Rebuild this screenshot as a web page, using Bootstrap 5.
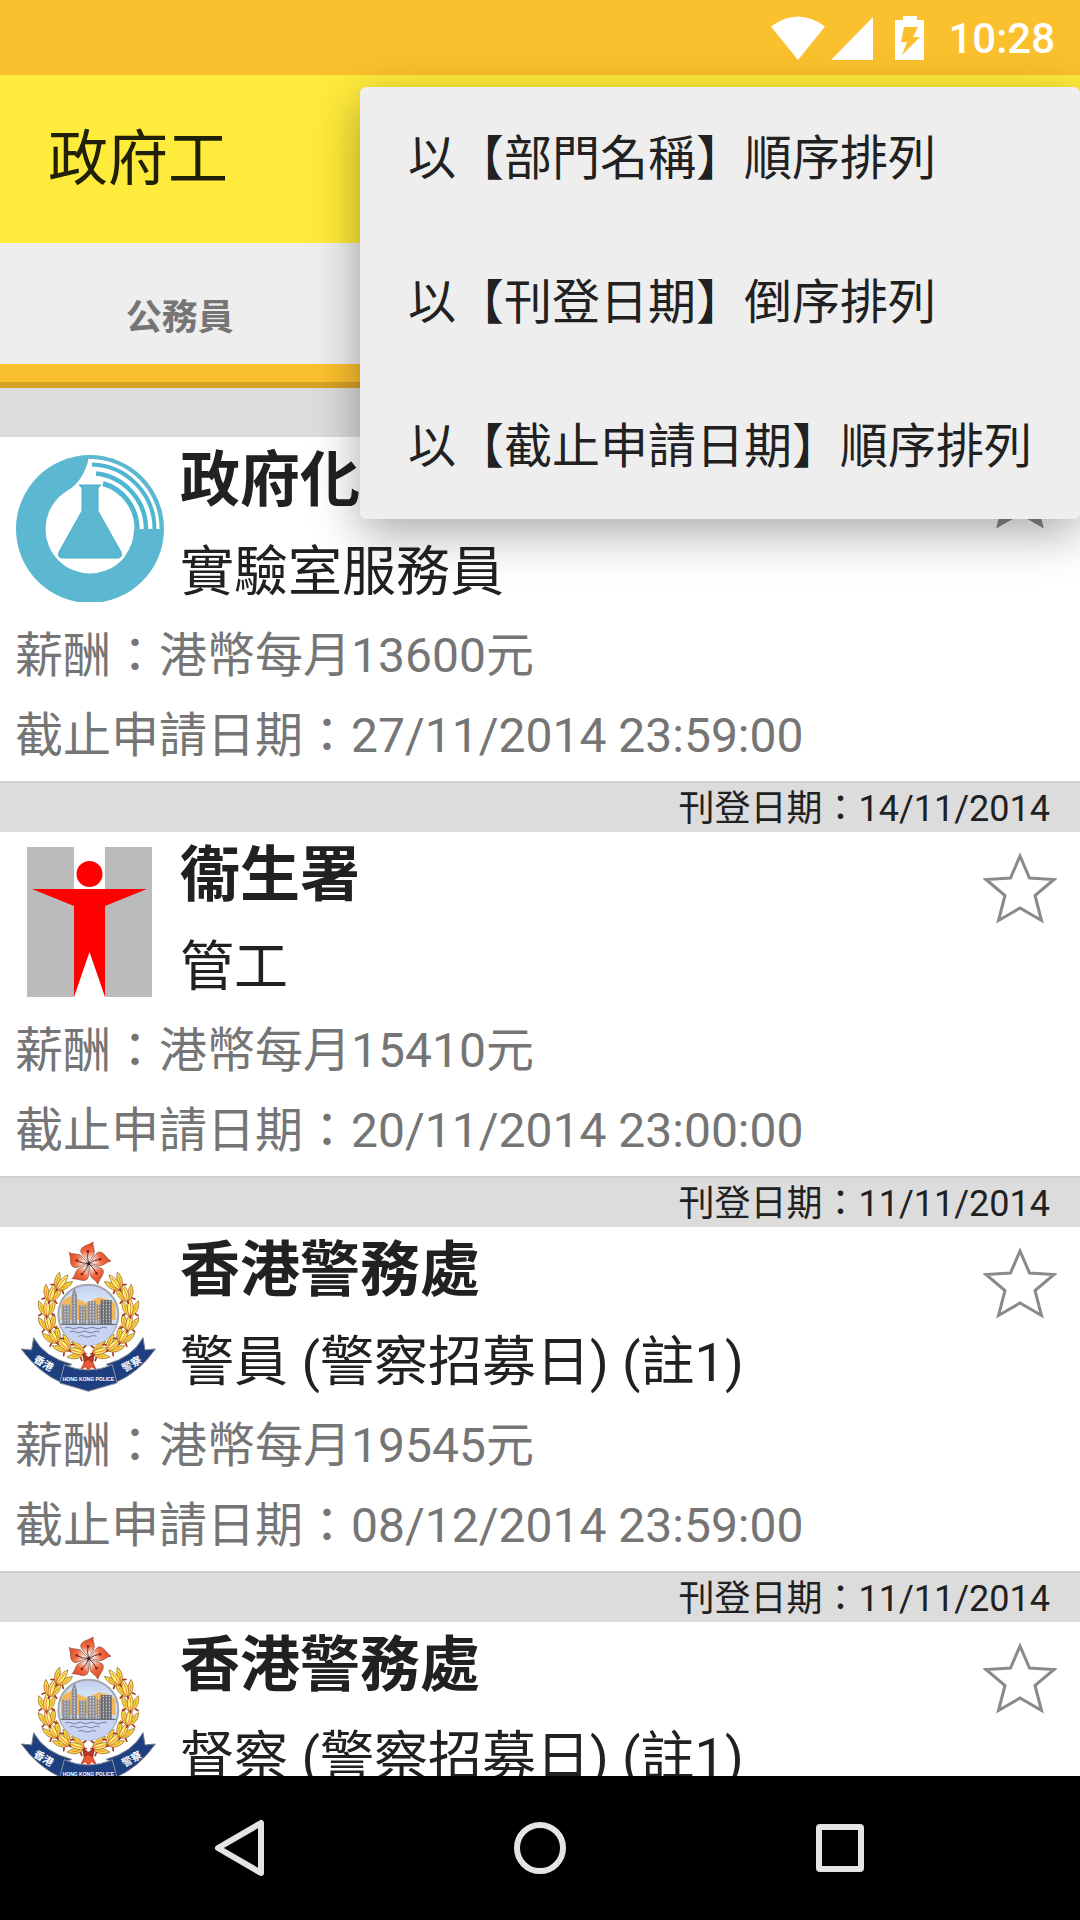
<!DOCTYPE html>
<html lang="zh-Hant-HK">
<head>
<meta charset="utf-8">
<meta name="viewport" content="width=device-width, initial-scale=1">
<title>政府工</title>
<link href="https://cdn.jsdelivr.net/npm/bootstrap@5.3.0/dist/css/bootstrap.min.css" rel="stylesheet">
<style>
  body { font-family: Roboto, "Noto Sans CJK TC", sans-serif; color: #212121; background: #fff; }
  svg { display: block; flex: none; }
  .status-bar { height: 75px; background: #fbc02d; color: #fff; padding: 3px 25px 0 0; font-size: 42px; line-height: 48px; font-weight: 500; }
  .status-icons { gap: 5px; margin: 0 23px 3px 0; }
  .app-bar { height: 168px; background: #ffeb3b; padding: 2px 48px 0; }
  .app-title { font-size: 60px; line-height: 72px; font-weight: 400; color: #212108; }
  .tab-strip { height: 145px; background: #eee; border-bottom: 6px solid #d6a326; }
  .tab-strip .tab-item { border: 0; background: none; color: #757575; font-size: 36px; line-height: 48px; font-weight: 700; border-bottom: 18px solid transparent; padding: 28px 0 0; }
  .tab-strip .tab-item.active { border-bottom-color: #fbc02d; }
  .tab-rule { width: 1px; height: 72px; margin-top: 36px; background: #b8b8b8; }
  .date-head { height: 49px; background: #dcdcdc; padding: 2px 30px 0; font-size: 36px; line-height: 48px; }
  .job { height: 346px; padding: 0 15px; border-bottom: 2px solid #cfcfcf; }
  .job-top { height: 179px; gap: 15px; }
  .job-logo { margin-top: 15px; width: 150px; height: 150px; }
  .dept { font-size: 60px; line-height: 80px; font-weight: 700; margin: 4px 0 0; white-space: nowrap; }
  .post { font-size: 54px; line-height: 80px; margin: 12px 0 0; white-space: nowrap; }
  .detail { font-size: 48px; line-height: 80px; margin: 0; color: #757575; white-space: nowrap; }
  .star-btn { border: 0; background: none; padding: 20px 8px 0 0; }
  .sort-menu { top: 87px; right: 0; width: 720px; max-width: 100%; background: #eee; border-radius: 6px; box-shadow: 0 14px 48px rgba(0,0,0,.34); z-index: 10; }
  .sort-menu button { height: 144px; border: 0; background: none; padding: 0 48px; font-size: 48px; line-height: 60px; color: #212121; text-align: left; white-space: nowrap; }
  .nav-keys { height: 144px; background: #000; padding: 0 90px; }
  .nav-keys button { border: 0; background: none; padding: 0; }
</style>
<script src="https://cdn.jsdelivr.net/npm/bootstrap@5.3.0/dist/js/bootstrap.bundle.min.js"></script>
</head>
<body class="vh-100 overflow-hidden d-flex flex-column position-relative">

<svg width="0" height="0" class="position-absolute" aria-hidden="true">
  <defs>
    <symbol id="star" viewBox="0 0 74 72">
      <path d="M37 4 46.500 26 71 27.500 52 43.500 58.500 68.500 37 56 15.500 68.500 22 43.500 3 27.500 27.500 26Z" stroke="#8a8a8a" stroke-width="3"/>
    </symbol>
    <g id="leaf">
      <path d="M0 24C-22 14-28-6-24-24-10-12-2 4 0 24ZM0 24C22 14 28-6 24-24 10-12 2 4 0 24Z" fill="#f6dd38" stroke="#8f5a30" stroke-width="2"/>
      <path d="M0 26C-13 8-10-14 1-32 11-12 12 8 0 26Z" fill="#fff36a" stroke="#8f5a30" stroke-width="2"/>
      <path d="M0 20Q-4-2 1-20M-3 18Q-16 6-18-10M3 18Q16 6 18-10" fill="none" stroke="#f08a48" stroke-width="3"/>
      <path d="M-16 16-23 21M16 16 23 21M0 22V28" stroke="#a8321e" stroke-width="5" stroke-linecap="round"/>
    </g>
    <g id="petal">
      <path d="M0 0C-3-14-22-24-24-38-22-55 0-54 14-66 10-56 18-46 17-34 15-22 4-16 0 0Z" fill="url(#petalFill)" stroke="#8d4a3a" stroke-width="2"/>
      <path d="M0-2Q-6-20-2-35" fill="none" stroke="#542018" stroke-width="2.500"/><circle cx="-2" cy="-37" r="4" fill="#8a1d12"/>
    </g>
    <linearGradient id="petalFill" x1="0" y1="0" x2="0" y2="1"><stop offset="0" stop-color="#e6401c"/><stop offset=".45" stop-color="#ee7048"/><stop offset=".85" stop-color="#fff"/></linearGradient>
    <linearGradient id="skyFill" x1="0" y1="0" x2="0" y2="1"><stop offset="0" stop-color="#c3cbf0"/><stop offset=".3" stop-color="#d5eaf7"/><stop offset="1" stop-color="#c5cdf0"/></linearGradient>
    <g id="wreathHalf">
      <use href="#leaf" transform="translate(234 394) rotate(-75)"/>
      <use href="#leaf" transform="translate(194 376) rotate(-48)"/>
      <use href="#leaf" transform="translate(163 349) rotate(-30)"/>
      <use href="#leaf" transform="translate(147 310) rotate(-14)"/>
      <use href="#leaf" transform="translate(143 266) rotate(0)"/>
      <use href="#leaf" transform="translate(157 223) rotate(16)"/>
      <use href="#leaf" transform="translate(187 190) rotate(36)"/>
    </g>
    <symbol id="police" viewBox="48 66 450 450">
      <use href="#wreathHalf"/>
      <use href="#wreathHalf" transform="translate(537 0) scale(-1 1)"/>
      <circle cx="268" cy="284" r="90" fill="url(#skyFill)" stroke="#a3a6ac" stroke-width="6"/>
      <path d="M186 252Q205 222 225 232L262 248 300 232Q330 236 350 252V300H186Z" fill="#f3b75e"/>
      <path d="M184 314H352A88 88 0 0 1 184 314Z" fill="#c9d3f3"/>
      <g fill="#8d8f96">
        <path d="M190 254h24v58h-24zM218 226l8-24 8 24v86h-16zM240 256h22v56h-22zM266 244h24v68h-24zM293 252h12v60h-12z"/>
        <path d="M305 240h33v72h-33z" fill="#686a70"/>
      </g>
      <path d="M198 254v58M207 254v58M226 220v92M247 256v56M255 256v56M274 246v66M283 246v66M299 252v60M313 242v70M322 242v70M331 242v70" stroke="#e3e3e6" stroke-width="3" stroke-dasharray="5 4"/>
      <path d="M186 313H350" stroke="#56575c" stroke-width="3"/>
      <path d="M198 324q10-5 18 0t18 0 18 0 18 0 18 0 18 0 18 0M212 336q10-5 18 0t18 0 18 0 18 0 18 0M238 349q10-5 18 0t18 0 18 0" fill="none" stroke="#77809f" stroke-width="3"/>
      <g transform="translate(269 131)">
        <use href="#petal"/><use href="#petal" transform="rotate(72)"/><use href="#petal" transform="rotate(144)"/><use href="#petal" transform="rotate(216)"/><use href="#petal" transform="rotate(288)"/>
        <circle r="4" fill="#222"/>
      </g>
      <path d="M67 387 98 390 104 353Q136 412 218 433L202 440 190 489Q118 458 67 387ZM469 387 438 390 432 353Q400 412 322 433L336 440 346 489Q420 458 469 387Z" fill="#1d3f80" stroke="#777c88" stroke-width="3"/>
      <path d="M196 434Q268 466 340 434L354 489Q312 501 268 514 226 501 182 489Z" fill="#1d3f80" stroke="#8d93a2" stroke-width="3"/>
      <path d="M262 412 246 448 260 440 268 452 277 440 291 448 275 412Z" fill="#e85a34" stroke="#a8321e" stroke-width="2"/>
      <path d="M268 415 253 403 257 424ZM268 415 284 403 280 424Z" fill="#e0482c" stroke="#a8321e" stroke-width="6" stroke-linejoin="round"/>
      <g fill="#fff" font-family="'Noto Sans CJK TC',sans-serif" font-weight="700">
        <text x="134" y="441" font-size="31" text-anchor="middle" transform="rotate(30 134 430)">香港</text>
        <text x="398" y="443" font-size="31" text-anchor="middle" transform="rotate(-30 398 432)">警察</text>
        <text x="268" y="482" font-size="15" text-anchor="middle" font-family="'Liberation Sans',sans-serif">HONG KONG POLICE</text>
      </g>
    </symbol>
  </defs>
</svg>

<header>
  <div class="status-bar d-flex align-items-center justify-content-end">
    <div class="status-icons d-flex">
      <svg width="54" height="44" viewBox="0 0 54 44" fill="#fff" aria-label="Wi-Fi"><path d="M0 10.500Q27-9.500 54 10.500L27 44Z"/></svg>
      <svg width="44" height="44" viewBox="0 0 44 44" fill="#fff" aria-label="訊號"><path d="M43 1V44H1Z"/></svg>
      <svg class="ms-3" width="30" height="44" viewBox="0 0 30 44" aria-label="電池"><path d="M8 0H22V4H29V44H0V4H8Z" fill="#fff"/><path d="M9 11H23L18 21H25L7 39 12 26H6Z" fill="#fbc02d"/></svg>
    </div>
    <span>10:28</span>
  </div>
  <div class="app-bar d-flex align-items-center">
    <h1 class="app-title mb-0">政府工</h1>
  </div>
  <nav class="tab-strip d-flex" aria-label="職位類別">
    <button type="button" class="tab-item active flex-fill w-100">公務員</button>
    <span class="tab-rule flex-shrink-0"></span>
    <button type="button" class="tab-item flex-fill w-100" aria-label="非公務員"></button>
    <button type="button" class="tab-item flex-fill w-100" aria-label="收藏"></button>
  </nav>
</header>

<main class="flex-grow-1 overflow-hidden" style="min-height:0">
  <div class="date-head"></div>
  <article class="job">
    <div class="job-top d-flex">
      <svg class="job-logo" viewBox="0 0 150 150" aria-label="政府化驗所">
        <circle cx="75" cy="77" r="74" fill="#5bb8d0"/>
        <circle cx="75" cy="77" r="44.500" fill="#fff"/>
        <path d="M74 5Q69 29 52 39L75 77H144.500A69.500 69.500 0 0 0 74 7Z" fill="#fff"/>
        <g fill="none" stroke="#4fb6d2">
          <path d="M77 12.500A64.500 64.500 0 0 1 139.500 77" stroke-width="4"/>
          <path d="M81 21.500A56 56 0 0 1 131 77" stroke-width="4.500"/>
          <path d="M88 31.500A47 47 0 0 1 122 77" stroke-width="5"/>
        </g>
        <path d="M144.500 77H119A45 45 0 0 1 110 104L130 116Z" fill="#5bb8d0"/>
        <path d="M64 33H86L83 36V59L106 100Q108 106 102 106H48Q42 106 44 100L67 59V36Z" fill="#5bb8d0" stroke="#45adc8" stroke-width="1"/>
      </svg>
      <div class="flex-grow-1 overflow-hidden">
        <h2 class="dept">政府化驗所</h2>
        <p class="post">實驗室服務員</p>
      </div>
      <button type="button" class="star-btn d-flex align-items-start" aria-label="已收藏"><svg width="74" height="72" fill="#8a8a8a"><use href="#star"/></svg></button>
    </div>
    <p class="detail">薪酬：港幣每月13600元</p>
    <p class="detail">截止申請日期：27/11/2014 23:59:00</p>
  </article>

  <div class="date-head text-end">刊登日期：14/11/2014</div>
  <article class="job">
    <div class="job-top d-flex">
      <svg class="job-logo" viewBox="0 0 150 150" aria-label="衞生署">
        <path d="M12 0H59V150H12ZM90 0H137V150H90Z" fill="#bbb"/>
        <path d="M60 40H90V150H60Z" fill="#fff"/>
        <circle cx="74.500" cy="27" r="13" fill="#f00"/>
        <path d="M17 42H132L90 59V150L74.500 105 59 150V59Z" fill="#f00"/>
      </svg>
      <div class="flex-grow-1 overflow-hidden">
        <h2 class="dept">衞生署</h2>
        <p class="post">管工</p>
      </div>
      <button type="button" class="star-btn d-flex align-items-start" aria-label="收藏"><svg width="74" height="72" fill="none"><use href="#star"/></svg></button>
    </div>
    <p class="detail">薪酬：港幣每月15410元</p>
    <p class="detail">截止申請日期：20/11/2014 23:00:00</p>
  </article>

  <div class="date-head text-end">刊登日期：11/11/2014</div>
  <article class="job">
    <div class="job-top d-flex">
      <svg class="job-logo" aria-label="香港警務處"><use href="#police"/></svg>
      <div class="flex-grow-1 overflow-hidden">
        <h2 class="dept">香港警務處</h2>
        <p class="post">警員 (警察招募日) (註1)</p>
      </div>
      <button type="button" class="star-btn d-flex align-items-start" aria-label="收藏"><svg width="74" height="72" fill="none"><use href="#star"/></svg></button>
    </div>
    <p class="detail">薪酬：港幣每月19545元</p>
    <p class="detail">截止申請日期：08/12/2014 23:59:00</p>
  </article>

  <div class="date-head text-end">刊登日期：11/11/2014</div>
  <article class="job">
    <div class="job-top d-flex">
      <svg class="job-logo" aria-label="香港警務處"><use href="#police"/></svg>
      <div class="flex-grow-1 overflow-hidden">
        <h2 class="dept">香港警務處</h2>
        <p class="post">督察 (警察招募日) (註1)</p>
      </div>
      <button type="button" class="star-btn d-flex align-items-start" aria-label="收藏"><svg width="74" height="72" fill="none"><use href="#star"/></svg></button>
    </div>
  </article>
</main>

<div class="sort-menu position-absolute d-flex flex-column" role="menu">
  <button type="button" role="menuitem">以【部門名稱】順序排列</button>
  <button type="button" role="menuitem">以【刊登日期】倒序排列</button>
  <button type="button" role="menuitem">以【截止申請日期】順序排列</button>
</div>

<footer class="nav-keys d-flex flex-shrink-0">
  <button type="button" class="w-100 d-flex align-items-center justify-content-center" aria-label="返回"><svg width="60" height="60" viewBox="0 0 60 60"><path d="M51 5V55L8 30Z" fill="none" stroke="#e4e4e4" stroke-width="6" stroke-linejoin="round"/></svg></button>
  <button type="button" class="w-100 d-flex align-items-center justify-content-center" aria-label="主畫面"><svg width="60" height="60" viewBox="0 0 60 60"><circle cx="30" cy="30" r="23" fill="none" stroke="#e4e4e4" stroke-width="6"/></svg></button>
  <button type="button" class="w-100 d-flex align-items-center justify-content-center" aria-label="最近使用"><svg width="60" height="60" viewBox="0 0 60 60"><rect x="9" y="9" width="42" height="42" rx="1" fill="none" stroke="#e4e4e4" stroke-width="6" stroke-linejoin="round"/></svg></button>
</footer>
</body>
</html>
